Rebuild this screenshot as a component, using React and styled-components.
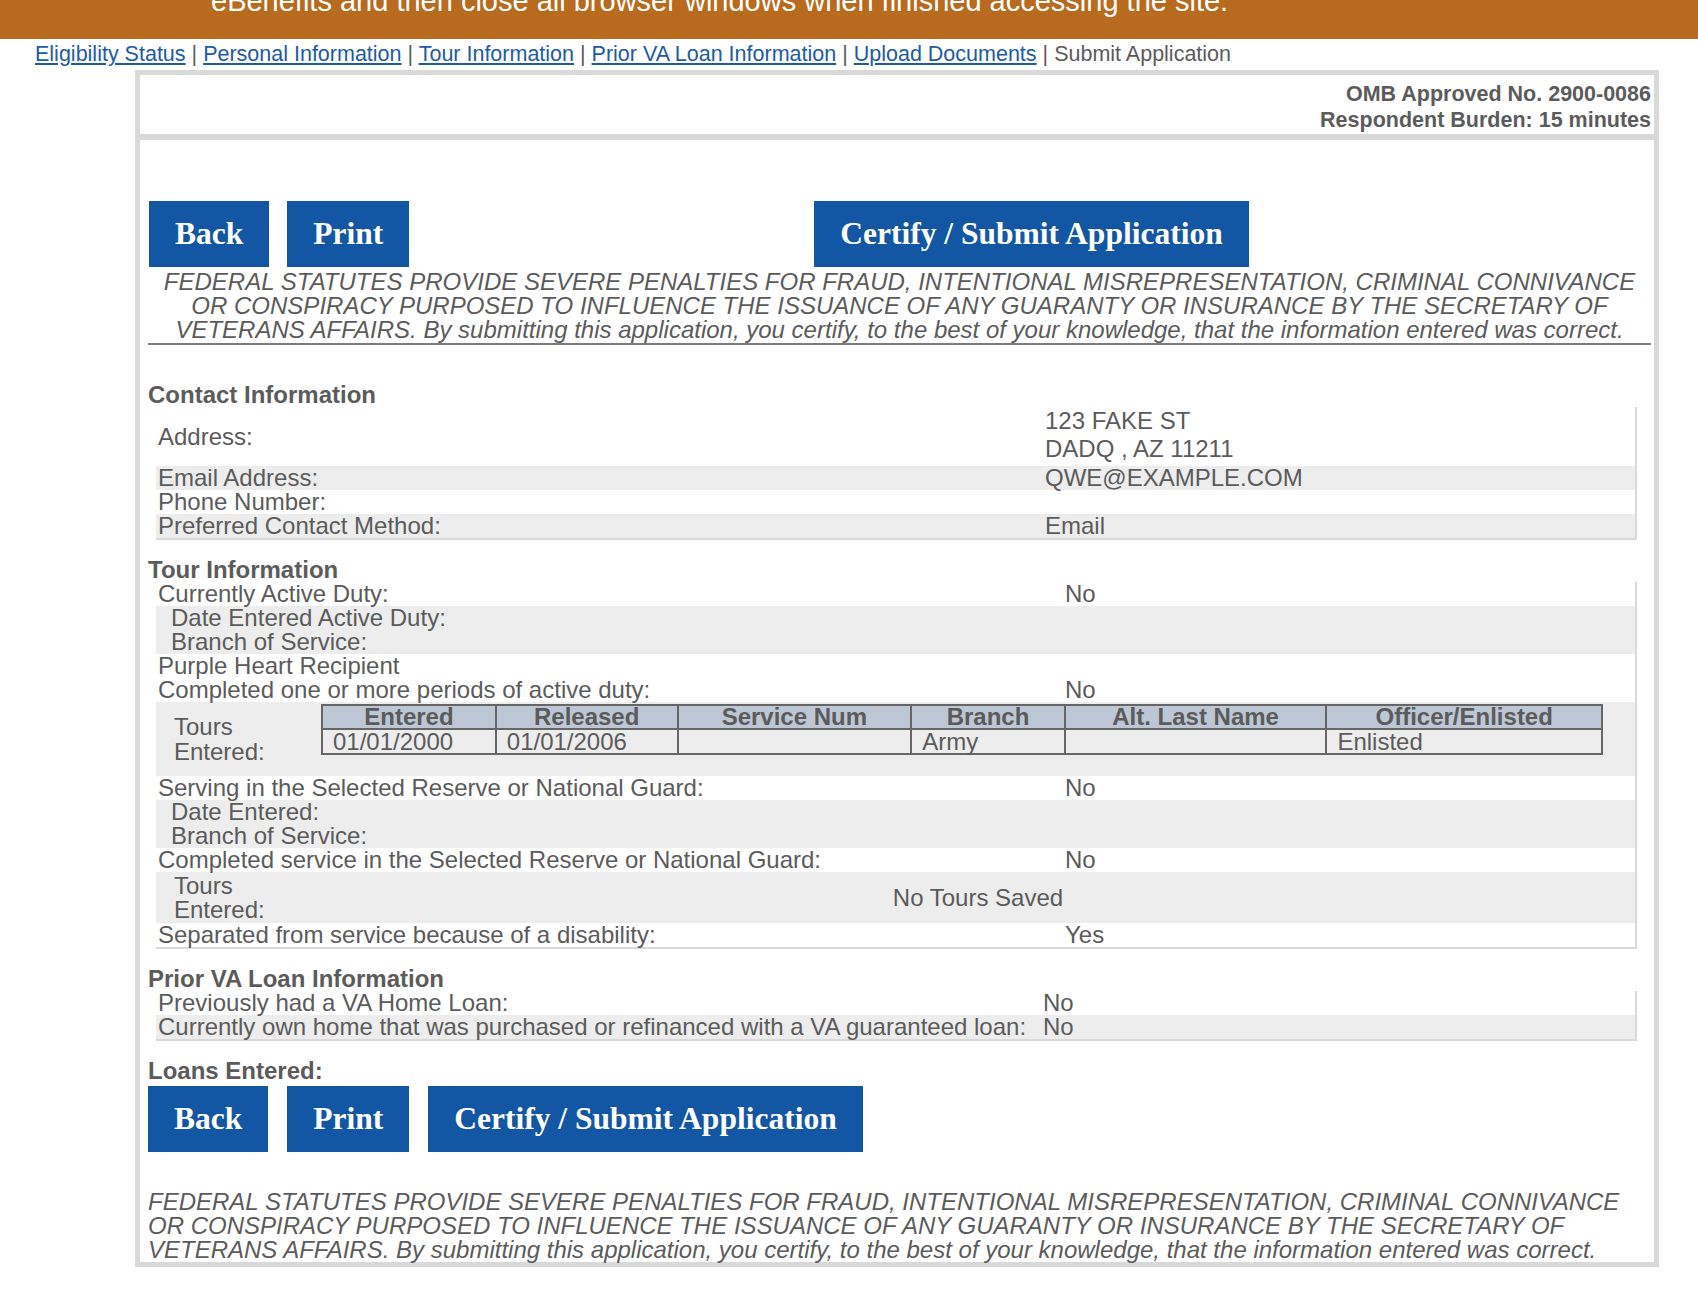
import React from 'react';
import styled, { createGlobalStyle } from 'styled-components';

const Global = createGlobalStyle`
  html, body { margin: 0; padding: 0; background: #fff; }
  body {
    font-family: "Liberation Sans", Arial, Helvetica, sans-serif;
    color: #5b5b5b;
  }
`;

const Banner = styled.div`
  height: 39px;
  background: #b86a1f;
  overflow: hidden;
  color: #fff;
`;

const BannerText = styled.div`
  margin-top: -16px;
  padding-left: 211px;
  font-size: 29px;
  line-height: 34px;
  white-space: nowrap;
`;

const Nav = styled.nav`
  box-sizing: border-box;
  height: 31px;
  padding: 3px 0 0 35px;
  font-size: 21.5px;
  line-height: 24px;
  color: #5b5b5b;
  white-space: nowrap;
`;

const NavLink = styled.a`
  color: #1d5ba6;
  text-decoration: underline;
`;

const Frame = styled.div`
  box-sizing: border-box;
  margin-left: 135px;
  width: 1524px;
  border: 5px solid #d9d9d9;
`;

const Header = styled.div`
  padding: 6px 3px 1px 0;
  text-align: right;
  font-weight: bold;
  font-size: 21.5px;
  line-height: 26px;
`;

const Divider = styled.div`
  height: 6px;
  background: #d9d9d9;
`;

const Body = styled.div`
  padding: 61px 3px 0 8px;
`;

const ButtonRow = styled.div`
  display: flex;
  gap: ${(p) => p.$gap}px;
  margin-left: ${(p) => p.$indent || 0}px;
  margin-top: ${(p) => p.$top || 0}px;
`;

const Button = styled.button`
  height: 66px;
  margin-left: ${(p) => p.$push || 0}px;
  padding: 0 26px;
  border: none;
  background: #1356a3;
  color: #fff;
  font-family: "Liberation Serif", "Times New Roman", serif;
  font-weight: bold;
  font-size: 31.5px;
  cursor: pointer;
`;

const Disclaimer = styled.p`
  margin: ${(p) => p.$top}px 0 0;
  font-style: italic;
  font-size: 24px;
  line-height: 24px;
  text-align: ${(p) => p.$align};
  white-space: nowrap;
`;

const Rule = styled.hr`
  margin: 1px 0 0 0;
  border: none;
  border-top: 2px solid #7d7d7d;
`;

const Heading = styled.h3`
  margin: ${(p) => p.$top}px 0 0;
  font-size: 24px;
  line-height: 24px;
  font-weight: bold;
`;

const Panel = styled.div`
  margin: 0 14px 0 8px;
  border-right: 2px solid #d9d9d9;
  border-bottom: 2px solid #d9d9d9;
  font-size: 24px;
  line-height: 24px;
`;

const Row = styled.div`
  display: grid;
  grid-template-columns: ${(p) => p.$label}px 1fr;
  align-items: center;
  background: ${(p) => (p.$shade ? '#ededed' : 'transparent')};
  white-space: nowrap;
`;

const Label = styled.div`
  padding-left: ${(p) => (p.$indent ? 15 : 2)}px;
`;

const Value = styled.div`
  padding: ${(p) => p.$pad || '0'};
  line-height: ${(p) => p.$lh || 24}px;
`;

const ToursLabel = styled.div`
  padding: ${(p) => p.$pad || '0'};
  padding-left: 18px;
  line-height: ${(p) => p.$lh}px;
`;

const ToursCell = styled.div`
  padding: ${(p) => p.$pad};
  text-align: ${(p) => p.$align || 'left'};
`;

const ToursTable = styled.table`
  width: 1282px;
  border-collapse: collapse;
  border: 2px solid #666;
  font-size: 24px;
`;

const Th = styled.th`
  padding: 0;
  border: 2px solid #666;
  background: #bdc7d5;
  font-weight: bold;
  line-height: 22px;
  text-align: center;
`;

const Td = styled.td`
  padding: 0 0 0 10px;
  border: 2px solid #666;
  line-height: 23px;
  text-align: left;
`;

const disclaimerLines = [
  'FEDERAL STATUTES PROVIDE SEVERE PENALTIES FOR FRAUD, INTENTIONAL MISREPRESENTATION, CRIMINAL CONNIVANCE',
  'OR CONSPIRACY PURPOSED TO INFLUENCE THE ISSUANCE OF ANY GUARANTY OR INSURANCE BY THE SECRETARY OF',
  'VETERANS AFFAIRS. By submitting this application, you certify, to the best of your knowledge, that the information entered was correct.',
];

function DisclaimerText({ top, align }) {
  return (
    <Disclaimer $top={top} $align={align}>
      {disclaimerLines.map((l, i) => (
        <React.Fragment key={i}>
          {l}
          {i < disclaimerLines.length - 1 && <br />}
        </React.Fragment>
      ))}
    </Disclaimer>
  );
}

const navItems = [
  'Eligibility Status',
  'Personal Information',
  'Tour Information',
  'Prior VA Loan Information',
  'Upload Documents',
];

const cols = [174, 182, 234, 154, 262, 276];
const heads = ['Entered', 'Released', 'Service Num', 'Branch', 'Alt. Last Name', 'Officer/Enlisted'];
const data = ['01/01/2000', '01/01/2006', '', 'Army', '', 'Enlisted'];

function InfoRow({ label, value, shade, indent, width }) {
  return (
    <Row $label={width} $shade={shade}>
      <Label $indent={indent}>{label}</Label>
      <Value>{value}</Value>
    </Row>
  );
}

export default function App() {
  return (
    <>
      <Global />
      <Banner>
        <BannerText>eBenefits and then close all browser windows when finished accessing the site.</BannerText>
      </Banner>
      <Nav>
        {navItems.map((n) => (
          <React.Fragment key={n}>
            <NavLink href="#">{n}</NavLink>
            {' | '}
          </React.Fragment>
        ))}
        Submit Application
      </Nav>
      <Frame>
        <Header>
          OMB Approved No. 2900-0086
          <br />
          Respondent Burden: 15 minutes
        </Header>
        <Divider />
        <Body>
          <ButtonRow $gap={18} $indent={1}>
            <Button>Back</Button>
            <Button>Print</Button>
            <Button $push={387}>Certify / Submit Application</Button>
          </ButtonRow>
          <DisclaimerText top={3} align="center" />
          <Rule />

          <Heading $top={38}>Contact Information</Heading>
          <Panel>
            <Row $label={889}>
              <Label>Address:</Label>
              <Value $lh={28} $pad="0 0 3px">
                123 FAKE ST
                <br />
                DADQ , AZ 11211
              </Value>
            </Row>
            <InfoRow width={889} shade label="Email Address:" value="QWE@EXAMPLE.COM" />
            <InfoRow width={889} label="Phone Number:" value="" />
            <InfoRow width={889} shade label="Preferred Contact Method:" value="Email" />
          </Panel>

          <Heading $top={18}>Tour Information</Heading>
          <Panel>
            <InfoRow width={909} label="Currently Active Duty:" value="No" />
            <InfoRow width={909} shade indent label="Date Entered Active Duty:" value="" />
            <InfoRow width={909} shade indent label="Branch of Service:" value="" />
            <InfoRow width={909} label="Purple Heart Recipient" value="" />
            <InfoRow width={909} label="Completed one or more periods of active duty:" value="No" />
            <Row $label={165} $shade>
              <ToursLabel $lh={25}>
                Tours
                <br />
                Entered:
              </ToursLabel>
              <ToursCell $pad="2px 0 21px">
                <ToursTable>
                  <colgroup>
                    {cols.map((w, i) => (
                      <col key={i} style={{ width: w }} />
                    ))}
                  </colgroup>
                  <thead>
                    <tr>
                      {heads.map((h) => (
                        <Th key={h}>{h}</Th>
                      ))}
                    </tr>
                  </thead>
                  <tbody>
                    <tr>
                      {data.map((d, i) => (
                        <Td key={i}>{d}</Td>
                      ))}
                    </tr>
                  </tbody>
                </ToursTable>
              </ToursCell>
            </Row>
            <InfoRow width={909} label="Serving in the Selected Reserve or National Guard:" value="No" />
            <InfoRow width={909} shade indent label="Date Entered:" value="" />
            <InfoRow width={909} shade indent label="Branch of Service:" value="" />
            <InfoRow width={909} label="Completed service in the Selected Reserve or National Guard:" value="No" />
            <Row $label={165} $shade>
              <ToursLabel $lh={24} $pad="2px 0 1px">
                Tours
                <br />
                Entered:
              </ToursLabel>
              <ToursCell $pad="0" $align="center">No Tours Saved</ToursCell>
            </Row>
            <InfoRow width={909} label="Separated from service because of a disability:" value="Yes" />
          </Panel>

          <Heading $top={18}>Prior VA Loan Information</Heading>
          <Panel>
            <InfoRow width={887} label="Previously had a VA Home Loan:" value="No" />
            <InfoRow
              width={887}
              shade
              label="Currently own home that was purchased or refinanced with a VA guaranteed loan:"
              value="No"
            />
          </Panel>

          <Heading $top={18}>Loans Entered:</Heading>
          <ButtonRow $gap={19} $top={3}>
            <Button>Back</Button>
            <Button>Print</Button>
            <Button>Certify / Submit Application</Button>
          </ButtonRow>
          <DisclaimerText top={38} align="left" />
        </Body>
      </Frame>
    </>
  );
}
